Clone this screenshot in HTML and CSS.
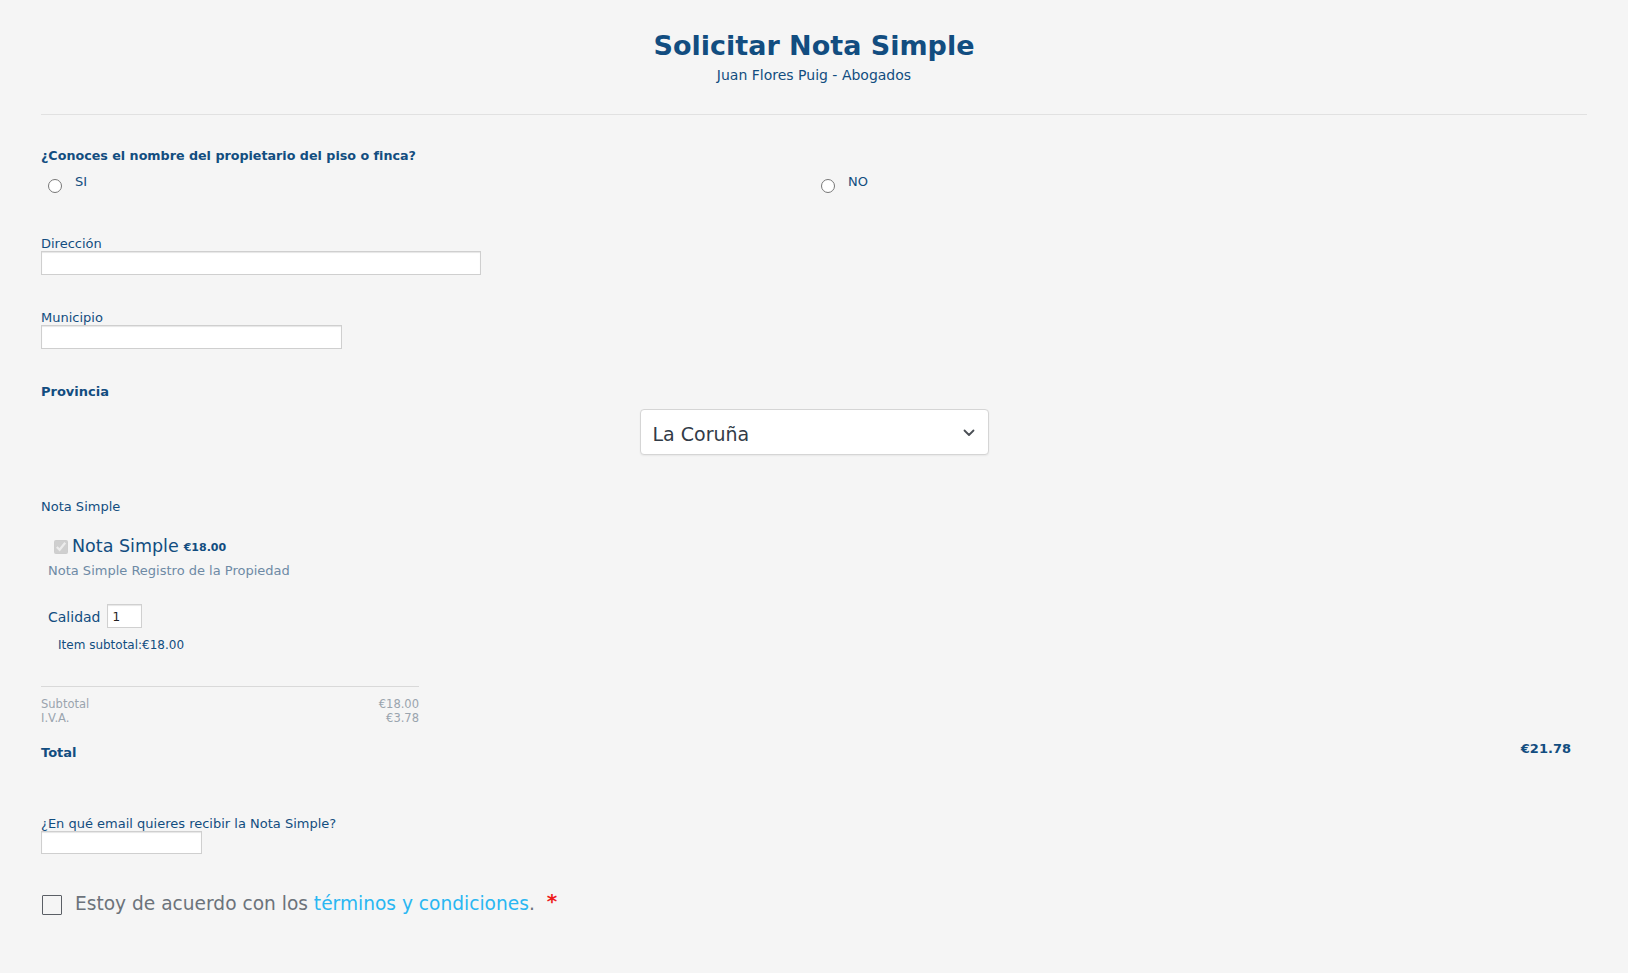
FILE: index.html
```html
<!DOCTYPE html>
<html lang="es">
<head>
<meta charset="utf-8">
<title>Solicitar Nota Simple</title>
<link rel="stylesheet" href="styles.css">
</head>
<body>
<div class="page">
  <header class="header">
    <h1 class="title">Solicitar Nota Simple</h1>
    <p class="subtitle">Juan Flores Puig - Abogados</p>
  </header>
  <hr class="divider">

  <div class="question">¿Conoces el nombre del propietario del piso o finca?</div>
  <div class="radios">
    <label class="radio-opt"><input type="radio" name="owner" class="radio"><span>SI</span></label>
    <label class="radio-opt"><input type="radio" name="owner" class="radio"><span>NO</span></label>
  </div>

  <div class="field field-dir">
    <label class="lbl">Dirección</label>
    <input type="text" class="txt txt-dir">
  </div>

  <div class="field field-mun">
    <label class="lbl">Municipio</label>
    <input type="text" class="txt txt-mun">
  </div>

  <div class="field field-prov">
    <div class="lbl lbl-bold">Provincia</div>
    <div class="select-wrap">
      <div class="select">
        <span class="select-val">La Coruña</span>
        <svg class="chev" width="12" height="8" viewBox="0 0 12 8"><path d="M1.5 1.5 L6 6 L10.5 1.5" fill="none" stroke="#4a4f55" stroke-width="1.8" stroke-linecap="round" stroke-linejoin="round"/></svg>
      </div>
    </div>
  </div>

  <div class="field field-nota">
    <div class="lbl">Nota Simple</div>
    <div class="product">
      <div class="product-head">
        <input type="checkbox" class="prod-check" checked disabled>
        <span class="prod-name">Nota Simple</span>
        <span class="prod-price">€18.00</span>
      </div>
      <div class="prod-desc">Nota Simple Registro de la Propiedad</div>
      <div class="qty-row">
        <span class="qty-lbl">Calidad</span>
        <input type="text" class="qty" value="1">
      </div>
      <div class="item-sub">Item subtotal:€18.00</div>
    </div>
  </div>

  <div class="summary">
    <div class="sum-row"><span>Subtotal</span><span>€18.00</span></div>
    <div class="sum-row"><span>I.V.A.</span><span>€3.78</span></div>
  </div>
  <div class="total-row">
    <span class="total-lbl">Total</span>
    <span class="total-amt">€21.78</span>
  </div>

  <div class="field field-email">
    <label class="lbl lbl-tight">¿En qué email quieres recibir la Nota Simple?</label>
    <input type="text" class="txt txt-email">
  </div>

  <div class="terms">
    <input type="checkbox" class="terms-check">
    <span class="terms-text">Estoy de acuerdo con los <a href="#" class="terms-link">términos y condiciones</a>.</span>
    <span class="req">*</span>
  </div>
</div>
</body>
</html>
```

FILE: styles.css
```css
* { box-sizing: border-box; }

html, body {
  margin: 0;
  padding: 0;
  background: #f5f5f5;
}

body {
  font-family: "DejaVu Sans", Verdana, sans-serif;
  color: #124d80;
  height: 973px;
  overflow: hidden;
}

.page {
  padding: 0 41px;
}

.header {
  padding-top: 30px;
  text-align: center;
}

.title {
  margin: 0;
  font-size: 27px;
  line-height: 32px;
  font-weight: bold;
  color: #124d80;
}

.subtitle {
  margin: 5px 0 0;
  font-size: 14px;
  line-height: 17px;
  color: #124d80;
}

.divider {
  margin: 30px 0 0;
  border: 0;
  height: 1px;
  background: #e1e1e1;
}

.question {
  margin-top: 33px;
  font-size: 12.7px;
  line-height: 16px;
  font-weight: bold;
}

.radios {
  display: grid;
  grid-template-columns: 1fr 1fr;
  margin-top: 10px;
}

.radio-opt {
  display: flex;
  align-items: flex-start;
  font-size: 13px;
  line-height: 16px;
  color: #124d80;
}

.radio {
  width: 14px;
  height: 14px;
  margin: 5px 13px 0 7px;
}

.lbl {
  display: block;
  font-size: 13px;
  line-height: 15px;
  color: #124d80;
}

.lbl-bold {
  font-weight: bold;
}

.lbl-tight {
  line-height: 14px;
}

.field-dir { margin-top: 43px; }
.field-mun { margin-top: 35px; }
.field-prov { margin-top: 35px; }
.field-nota { margin-top: 44px; }
.field-email { margin-top: 56px; }

.txt {
  display: block;
  height: 24px;
  margin: 0;
  background: #fff;
  border: 1px solid #cfcfcf;
  box-shadow: inset 0 1px 1px #e6e6e6;
  font-family: inherit;
  font-size: 13px;
  padding: 2px 4px;
}

.txt-dir { width: 440px; }
.txt-mun { width: 301px; }
.txt-email { width: 161px; height: 23px; }

.select-wrap {
  display: flex;
  justify-content: center;
  margin-top: 10px;
}

.select {
  width: 349px;
  height: 46px;
  background: #fff;
  border: 1px solid #d5d5d5;
  border-radius: 4px;
  box-shadow: 0 1px 2px rgba(0,0,0,0.06);
  display: flex;
  align-items: center;
  justify-content: space-between;
  padding: 4px 13px 0 12px;
  font-size: 19px;
  color: #323b47;
}

.chev {
  margin-top: -2px;
}

.product {
  padding-left: 7px;
}

.product-head {
  display: flex;
  align-items: center;
  margin-top: 22px;
  height: 20px;
}

.prod-check {
  width: 14px;
  height: 14px;
  margin: 2px 4px 0 6px;
}

.prod-name {
  font-size: 17.5px;
  line-height: 20px;
  color: #124d80;
}

.prod-price {
  font-size: 11px;
  font-weight: bold;
  margin-left: 5px;
  margin-top: 3px;
}

.prod-desc {
  margin-top: 7px;
  font-size: 13px;
  line-height: 15px;
  color: #6e8aa5;
}

.qty-row {
  display: flex;
  align-items: center;
  margin-top: 26px;
}

.qty-lbl {
  font-size: 14px;
  line-height: 17px;
  color: #124d80;
  margin-top: 3px;
}

.qty {
  width: 35px;
  height: 24px;
  margin-left: 6px;
  background: #fff;
  border: 1px solid #d0d0d0;
  box-shadow: inset 0 1px 1px #e6e6e6;
  font-family: inherit;
  font-size: 12px;
  padding: 3px 5px 1px;
  color: #222;
}

.item-sub {
  margin-top: 10px;
  padding-left: 10px;
  font-size: 12px;
  line-height: 14px;
  color: #124d80;
}

.summary {
  width: 378px;
  margin-top: 34px;
  border-top: 1px solid #d9d9d9;
  padding-top: 10px;
}

.sum-row {
  display: flex;
  justify-content: space-between;
  font-size: 11.5px;
  line-height: 14px;
  color: #9aa4ae;
}

.total-row {
  display: flex;
  justify-content: space-between;
  align-items: flex-start;
  margin-top: 16px;
  padding-right: 16px;
  font-size: 13px;
  line-height: 16px;
  font-weight: bold;
}

.total-lbl {
  margin-top: 4px;
}

.terms {
  display: flex;
  align-items: center;
  margin-top: 39px;
}

.terms-check {
  appearance: none;
  -webkit-appearance: none;
  width: 20px;
  height: 20px;
  margin: 1px 13px 0 1px;
  border: 1.5px solid #5b5f66;
  background: transparent;
  border-radius: 1px;
}

.terms-text {
  font-size: 18.6px;
  line-height: 22px;
  color: #6c737b;
}

.terms-link {
  color: #29b7f2;
  text-decoration: none;
}

.req {
  align-self: flex-start;
  margin-left: 12px;
  margin-top: -3px;
  font-size: 20px;
  font-weight: bold;
  color: #ee1c1c;
  line-height: 22px;
}
```
